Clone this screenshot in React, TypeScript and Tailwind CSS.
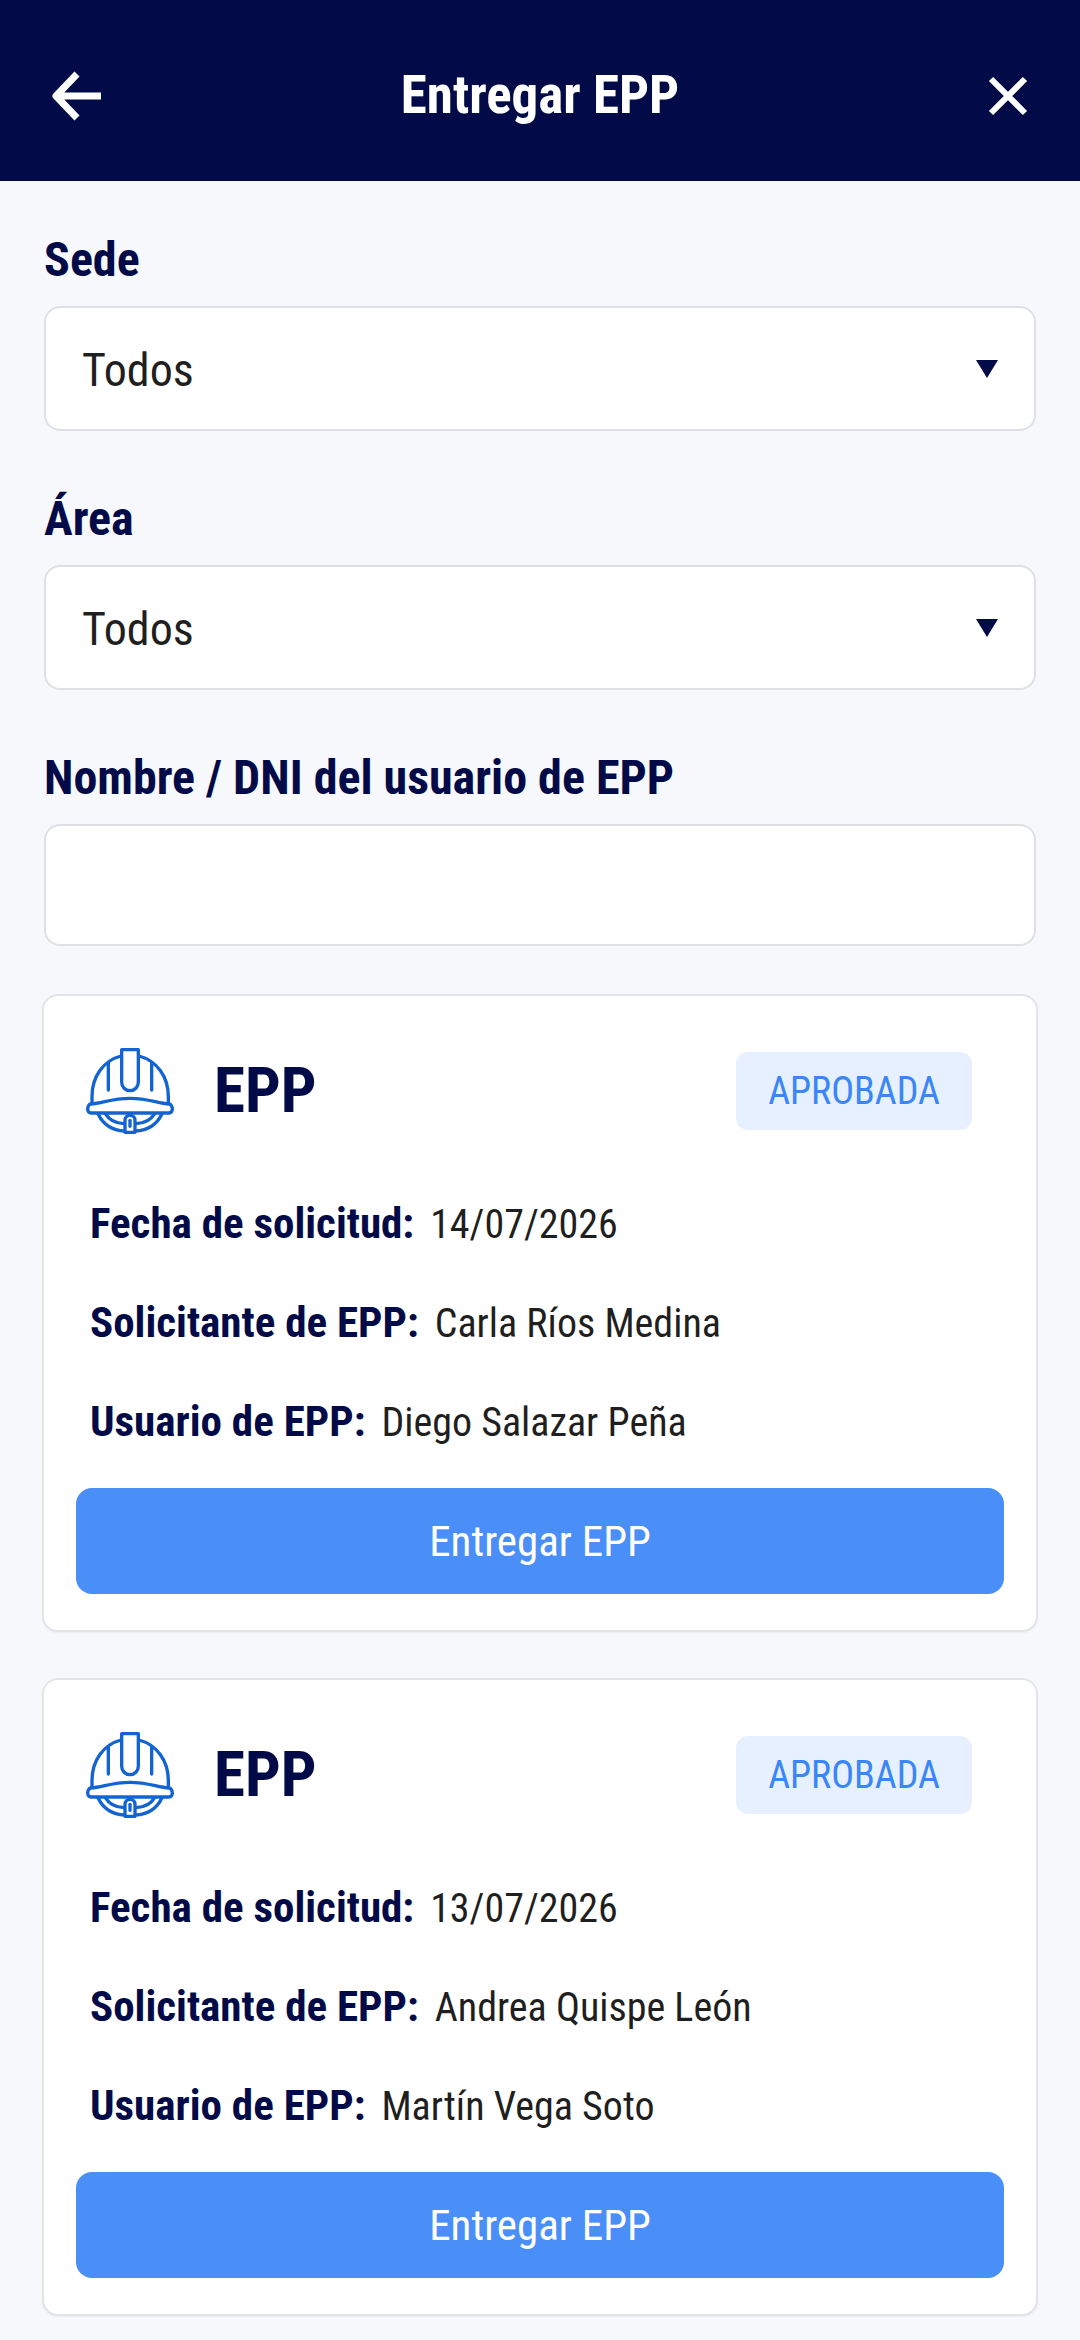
import { useState, type ReactNode } from "react";

interface Solicitud {
  id: number;
  estado: string;
  fecha: string;
  solicitante: string;
  usuario: string;
}

const SEDES = ["Todos", "Lima", "Arequipa", "Trujillo"];
const AREAS = ["Todos", "Almacén", "Mantenimiento", "Producción"];

const SOLICITUDES: Solicitud[] = [
  {
    id: 1,
    estado: "APROBADA",
    fecha: "14/07/2026",
    solicitante: "Carla Ríos Medina",
    usuario: "Diego Salazar Peña",
  },
  {
    id: 2,
    estado: "APROBADA",
    fecha: "13/07/2026",
    solicitante: "Andrea Quispe León",
    usuario: "Martín Vega Soto",
  },
];

function BackIcon() {
  return (
    <svg viewBox="0 0 50 50" className="size-[50px]" fill="none" stroke="currentColor" strokeWidth="7">
      <path d="M25 3 4 25l21 22M4 25h45" strokeLinejoin="round" />
    </svg>
  );
}

function CloseIcon() {
  return (
    <svg viewBox="0 0 40 40" className="size-10" fill="none" stroke="currentColor" strokeWidth="6">
      <path d="m3 3 34 34M37 3 3 37" />
    </svg>
  );
}

function HelmetIcon() {
  return (
    <svg
      viewBox="0 0 264 258"
      className="h-[86px] w-[88px] shrink-0 text-[#1463d2]"
      fill="none"
      stroke="currentColor"
      strokeWidth="10"
      strokeLinecap="round"
      strokeLinejoin="round"
      aria-hidden="true"
    >
      {/* dome and centre rib */}
      <path d="M18 164v-18C18 86 52 38 105 24M159 24c53 14 88 62 88 122v18" />
      <path d="M107 5h50v98a25 25 0 0 1-50 0z" />
      <path d="M67 46v80M197 46v80" />
      {/* brim */}
      <path d="M14 168c36-2 62-17 118-17s82 15 118 17c5 1 9 8 9 15s-4 12-10 12H15c-6 0-10-5-10-12s4-14 9-15z" />
      {/* chin strap */}
      <path d="M36 197c16 34 44 50 80 52M228 197c-16 34-44 50-80 52" />
      <path d="M58 197c12 20 30 29 56 30M206 197c-12 20-30 29-56 30" />
      <path d="M117 253v-36a15 15 0 0 1 30 0v36z" />
      <path d="M132 217v18" />
    </svg>
  );
}

interface FieldProps {
  id: string;
  label: string;
  children: ReactNode;
}

function Field({ id, label, children }: FieldProps) {
  return (
    <div>
      <label htmlFor={id} className="block text-5xl/[56px] font-bold text-[#020b47]">
        {label}
      </label>
      <div className="mt-[18px]">{children}</div>
    </div>
  );
}

interface SelectProps {
  id: string;
  value: string;
  options: string[];
  onChange: (value: string) => void;
}

function Select({ id, value, options, onChange }: SelectProps) {
  return (
    <div className="relative">
      <select
        id={id}
        value={value}
        onChange={(e) => onChange(e.target.value)}
        className="block h-[125px] w-full appearance-none rounded-2xl border-2 border-[#dfe0e4] bg-white px-9 pt-1 text-[46px] text-[#1f1f1f]"
      >
        {options.map((o) => (
          <option key={o}>{o}</option>
        ))}
      </select>
      <svg
        viewBox="0 0 22 18"
        className="pointer-events-none absolute inset-y-0 right-[38px] my-auto h-[18px] w-[22px] fill-[#020b47]"
        aria-hidden="true"
      >
        <path d="M0 0h22L11 18z" />
      </svg>
    </div>
  );
}

function Dato({ label, value }: { label: string; value: string }) {
  return (
    <div className="flex items-baseline gap-4">
      <dt className="text-[43px]/[50px] font-bold text-[#020b47]">{label}</dt>
      <dd className="text-[40px]/[50px] text-[#1f1f1f]">{value}</dd>
    </div>
  );
}

function SolicitudCard({ solicitud }: { solicitud: Solicitud }) {
  return (
    <article className="rounded-2xl border-2 border-[#e3e4e8] bg-white px-8 pt-[52px] pb-9 shadow-xs">
      <div className="flex items-center pr-8 pl-2.5">
        <HelmetIcon />
        <h2 className="ml-10 flex-1 text-[63px]/[86px] font-bold text-[#020b47]">EPP</h2>
        <span className="rounded-xl bg-[#e6f0fe] px-8 py-[14px] text-[38px]/[50px] text-[#3b86f7]">
          {solicitud.estado}
        </span>
      </div>

      <dl className="mt-16 space-y-[47px] px-3.5">
        <Dato label="Fecha de solicitud:" value={solicitud.fecha} />
        <Dato label="Solicitante de EPP:" value={solicitud.solicitante} />
        <Dato label="Usuario de EPP:" value={solicitud.usuario} />
      </dl>

      <button
        type="button"
        className="mt-10 h-[106px] w-full rounded-2xl bg-[#4a8ef8] text-[43px] text-white"
      >
        Entregar EPP
      </button>
    </article>
  );
}

export default function App() {
  const [sede, setSede] = useState("Todos");
  const [area, setArea] = useState("Todos");
  const [busqueda, setBusqueda] = useState("");

  return (
    <div className="min-h-screen bg-[#f7f8fc] font-['Roboto_Condensed',Roboto,sans-serif]">
      <header className="flex h-[181px] items-center justify-between bg-[#020b47] px-[52px] pt-2.5 text-white">
        <button type="button" aria-label="Volver" className="flex w-[52px] justify-start">
          <BackIcon />
        </button>
        <h1 className="text-[53px] font-bold">Entregar EPP</h1>
        <button type="button" aria-label="Cerrar" className="flex w-[52px] justify-end">
          <CloseIcon />
        </button>
      </header>

      <main className="px-[42px] pt-[51px] pb-6">
        <form className="space-y-[60px] px-0.5" onSubmit={(e) => e.preventDefault()}>
          <Field id="sede" label="Sede">
            <Select id="sede" value={sede} options={SEDES} onChange={setSede} />
          </Field>
          <Field id="area" label="Área">
            <Select id="area" value={area} options={AREAS} onChange={setArea} />
          </Field>
          <Field id="busqueda" label="Nombre / DNI del usuario de EPP">
            <input
              id="busqueda"
              type="text"
              value={busqueda}
              onChange={(e) => setBusqueda(e.target.value)}
              className="block h-[122px] w-full rounded-2xl border-2 border-[#dfe0e4] bg-white px-9 text-[46px] text-[#1f1f1f]"
            />
          </Field>
        </form>

        <section className="mt-12 space-y-[46px]">
          {SOLICITUDES.map((s) => (
            <SolicitudCard key={s.id} solicitud={s} />
          ))}
        </section>
      </main>
    </div>
  );
}
